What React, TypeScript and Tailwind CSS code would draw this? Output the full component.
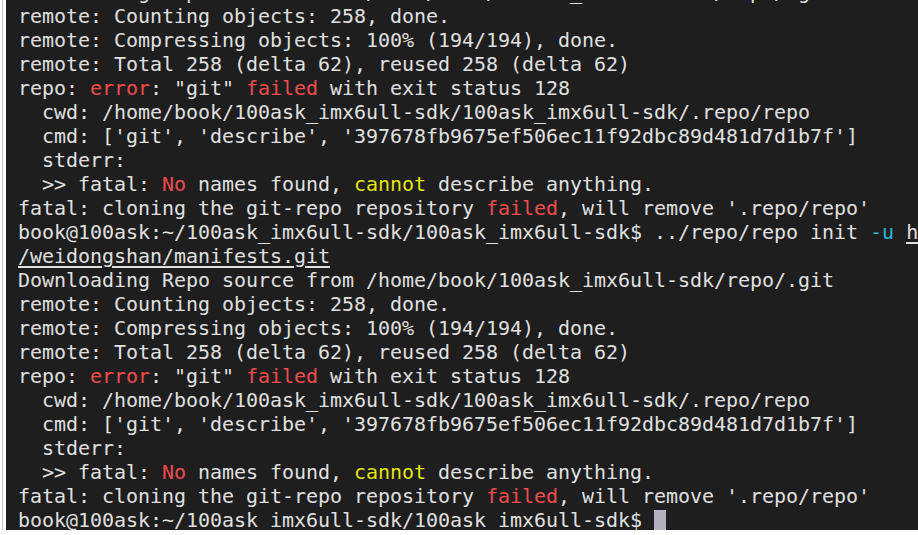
import React from "react";

const R = ({ children }: { children: React.ReactNode }) => (
  <span className="text-[#f14c4c]">{children}</span>
);
const Y = ({ children }: { children: React.ReactNode }) => (
  <span className="text-[#e5e510]">{children}</span>
);
const C = ({ children }: { children: React.ReactNode }) => (
  <span className="text-[#29b8db]">{children}</span>
);
const U = ({ children }: { children: React.ReactNode }) => (
  <span className="underline decoration-2 underline-offset-[3px]">{children}</span>
);

const errorBlock = (k: string): React.ReactNode[] => [
  <>remote: Counting objects: 258, done.</>,
  <>remote: Compressing objects: 100% (194/194), done.</>,
  <>remote: Total 258 (delta 62), reused 258 (delta 62)</>,
  <>
    repo: <R>error</R>: "git" <R>failed</R> with exit status 128
  </>,
  <>{"  cwd: /home/book/100ask_imx6ull-sdk/100ask_imx6ull-sdk/.repo/repo"}</>,
  <>{"  cmd: ['git', 'describe', '397678fb9675ef506ec11f92dbc89d481d7d1b7f']"}</>,
  <>{"  stderr:"}</>,
  <>
    {"  >> fatal: "}
    <R>No</R> names found, <Y>cannot</Y> describe anything.
  </>,
  <>
    fatal: cloning the git-repo repository <R>failed</R>, will remove '.repo/repo'
  </>,
].map((n, i) => <React.Fragment key={k + i}>{n}</React.Fragment>);

const prompt = "book@100ask:~/100ask_imx6ull-sdk/100ask_imx6ull-sdk$ ";

export default function App() {
  const lines: React.ReactNode[] = [
    <>Downloading Repo source from /home/book/100ask_imx6ull-sdk/repo/.git</>,
    ...errorBlock("a"),
    <>
      {prompt}../repo/repo init <C>-u</C> <U>https://gitee.com</U>
    </>,
    <>
      <U>/weidongshan/manifests.git</U>
    </>,
    <>Downloading Repo source from /home/book/100ask_imx6ull-sdk/repo/.git</>,
    ...errorBlock("b"),
    <>
      {prompt}
      <span className="inline-block w-[12px] h-[22px] align-[-5px] bg-[#b2b0bd]" />
    </>,
  ];

  return (
    <div className="w-[918px] h-[535px] flex flex-col bg-white overflow-hidden">
      <div className="flex flex-1 min-h-0">
        <div className="w-[6px] flex shrink-0 bg-white">
          <div className="w-[2px]" />
          <div className="w-[1px] bg-[#c4c4c4]" />
        </div>
        <div className="flex-1 bg-[#1e1e1e] overflow-hidden pl-[12px]">
          <div
            className="mt-[-20px] whitespace-pre text-[20px] leading-[24px] tracking-[-0.04px] text-[#e0e0e0]"
            style={{ fontFamily: '"DejaVu Sans Mono", "Liberation Mono", monospace' }}
          >
            {lines.map((l, i) => (
              <div key={i} className="h-[24px]">
                {l}
              </div>
            ))}
          </div>
        </div>
      </div>
      <div className="h-[5px] shrink-0 bg-white" />
    </div>
  );
}
